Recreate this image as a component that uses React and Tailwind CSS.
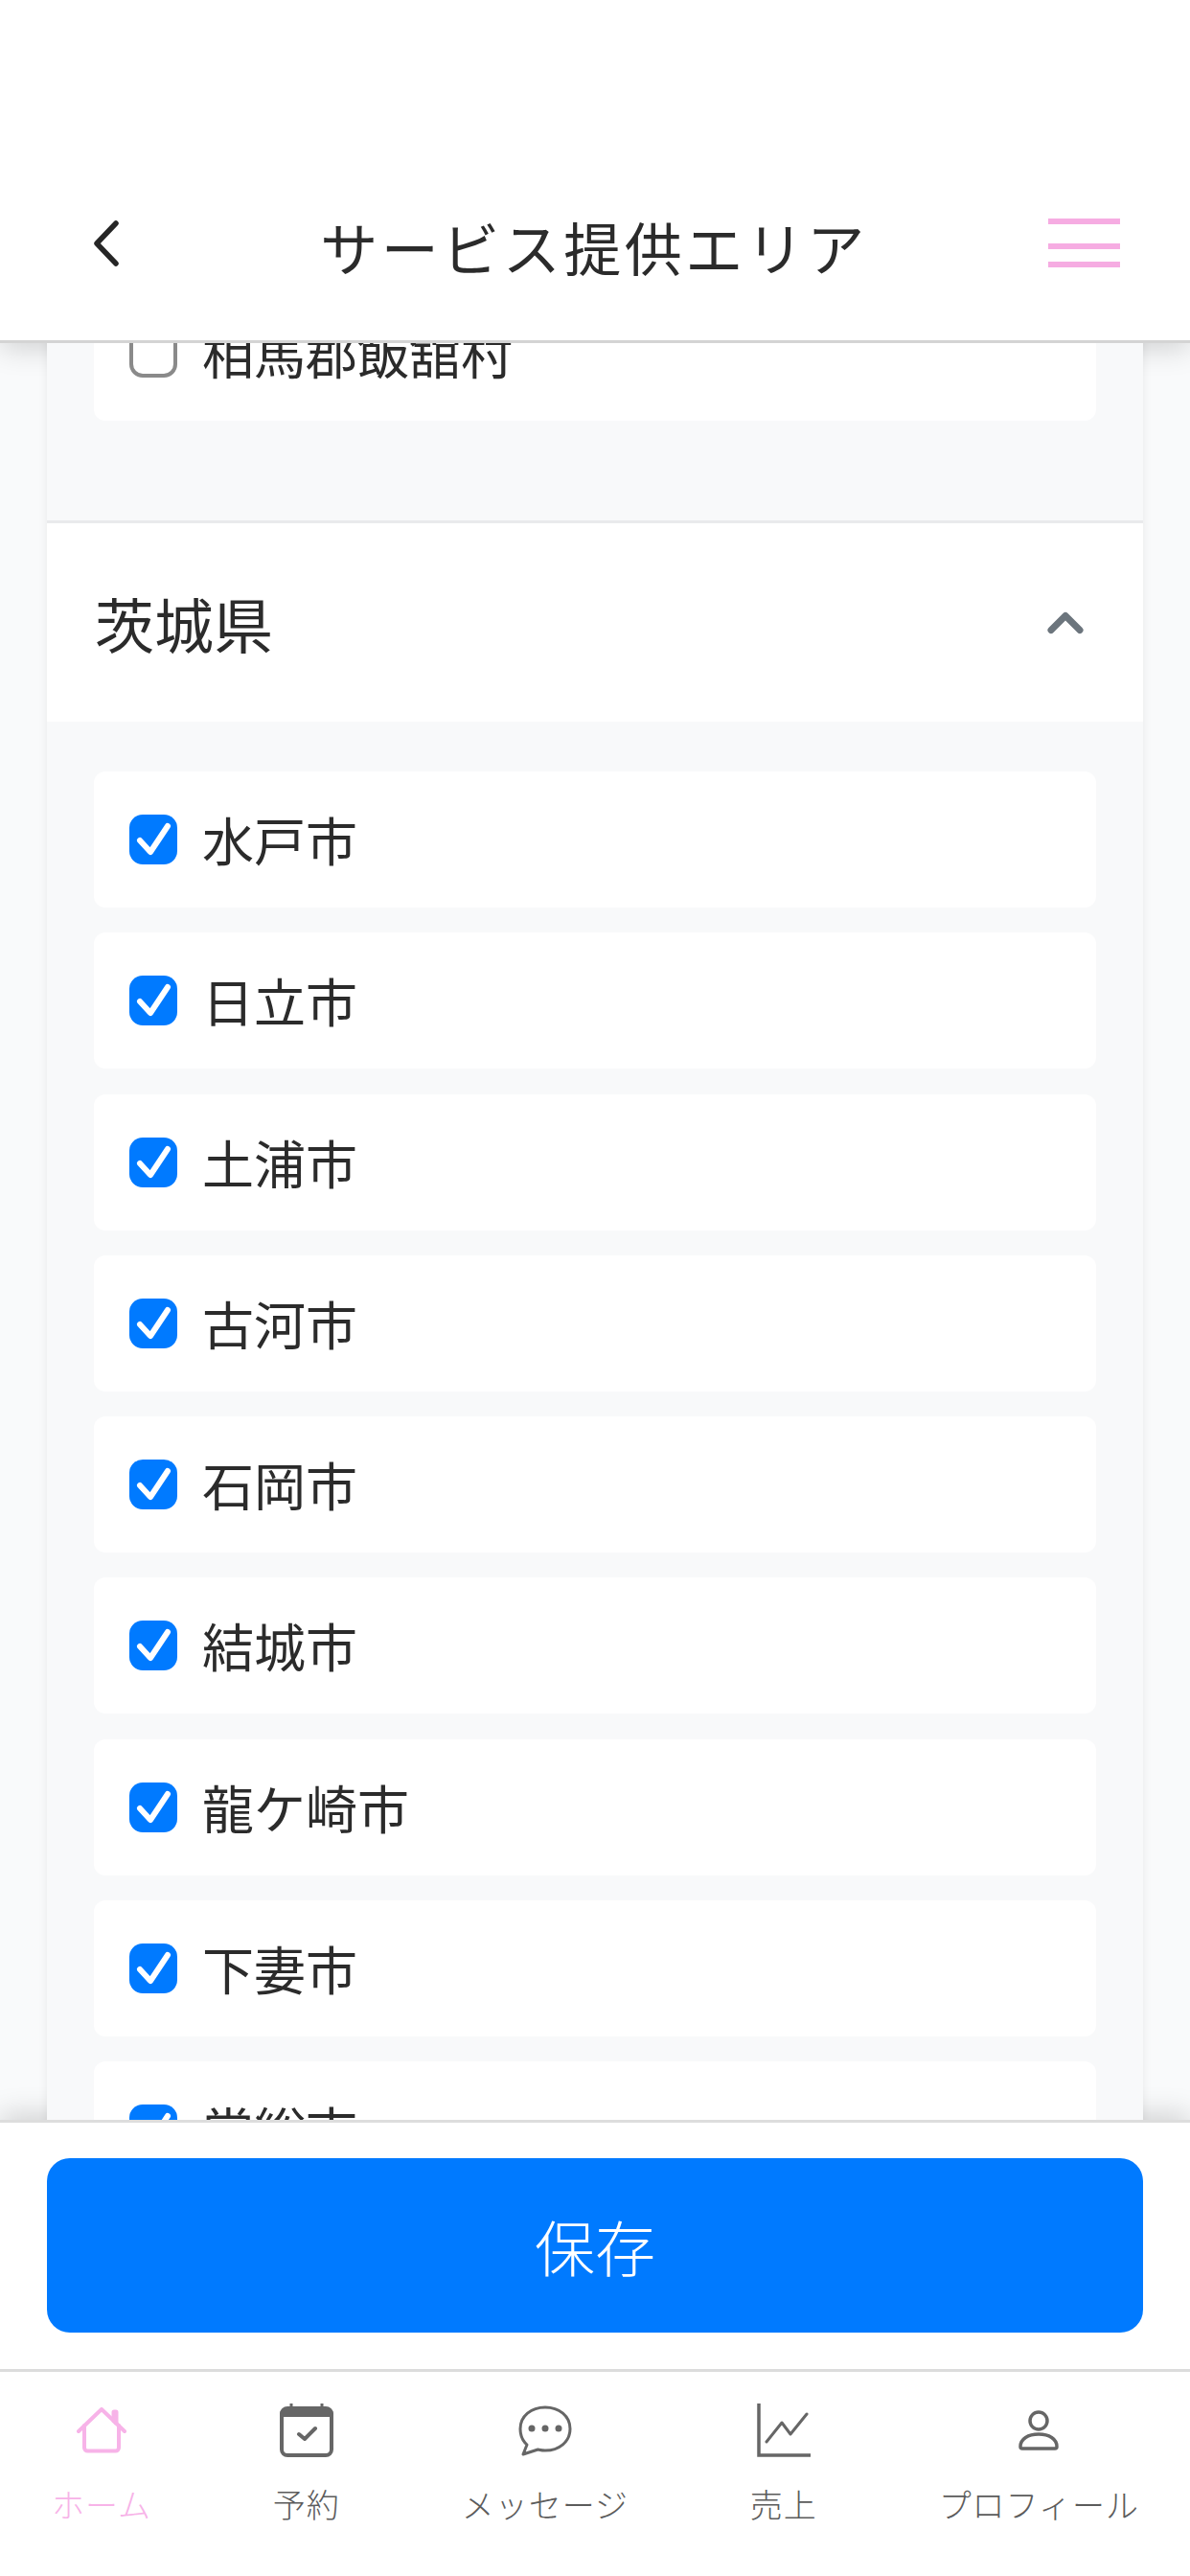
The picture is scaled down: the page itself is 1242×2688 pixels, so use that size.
import { ChevronUp } from "lucide-react";

const cities = ["水戸市", "日立市", "土浦市", "古河市", "石岡市", "結城市", "龍ケ崎市", "下妻市", "常総市"];

function CityRow({ name, checked }) {
  return (
    <label className="flex h-[142px] items-center rounded-[12px] bg-white pl-[37px]">
      {checked ? (
        <span className="h-[52px] w-[50px] rounded-[14px] bg-[#007aff]">
          <svg width="50" height="52" viewBox="0 0 50 52" fill="none" stroke="#fff" strokeWidth="6" strokeLinecap="round" strokeLinejoin="round">
            <path d="M11 27l11 12 18-27" />
          </svg>
        </span>
      ) : (
        <span className="h-[52px] w-[50px] rounded-[14px] border-[4px] border-[#8a8a8a] bg-white" />
      )}
      <span className="ml-[26px] text-[54px] leading-none text-[#2b2b2b]">{name}</span>
    </label>
  );
}

function HomeIcon() {
  return (
    <svg width="52" height="48" viewBox="0 0 52 48" fill="none" stroke="#f7b3e8" strokeWidth="4" strokeLinecap="round" strokeLinejoin="round">
      <path d="M2 25 26 2l24 23" />
      <path d="M8 19v23a3.500 3.500 0 0 0 3.500 3.500h29a3.500 3.500 0 0 0 3.500-3.500V19" />
      <path d="M39 14V5h2v11" strokeWidth="5" />
    </svg>
  );
}

function CalendarIcon() {
  return (
    <svg width="56" height="56" viewBox="0 0 56 56" fill="none">
      <rect x="2" y="5" width="52" height="49" rx="6" stroke="#666" strokeWidth="4" />
      <path d="M0 11a6 6 0 0 1 6-6h44a6 6 0 0 1 6 6v3H0z" fill="#666" />
      <path d="M12 0v6M44 0v6" stroke="#666" strokeWidth="3" />
      <path d="M20 32l6 5 11-11" stroke="#666" strokeWidth="4" strokeLinecap="round" strokeLinejoin="round" />
    </svg>
  );
}

function ChatIcon() {
  return (
    <svg width="56" height="53" viewBox="0 0 56 53" fill="none">
      <path d="M28 2C42.500 2 54 11 54 24.500S42.500 47 28 47C25 47 23 46.500 20.500 46L5 51 9 41C4.500 37 2 31 2 24.500 2 11 13.500 2 28 2z" stroke="#666" strokeWidth="3" strokeLinejoin="round" />
      <circle cx="14" cy="24" r="3.500" fill="#666" />
      <circle cx="28" cy="24" r="3.500" fill="#666" />
      <circle cx="42" cy="24" r="3.500" fill="#666" />
    </svg>
  );
}

function ChartIcon() {
  return (
    <svg width="56" height="56" viewBox="0 0 56 56" fill="none" stroke="#666">
      <path d="M2 0v54h54" strokeWidth="3.500" />
      <path d="M10 40l16-20 9 12 17-21" strokeWidth="3" strokeLinecap="round" strokeLinejoin="round" />
    </svg>
  );
}

function PersonIcon() {
  return (
    <svg width="42" height="42" viewBox="0 0 42 42" fill="none" stroke="#666" strokeWidth="3.500">
      <circle cx="21" cy="11" r="9" />
      <path d="M2 38C2 30 10 25 21 25s19 5 19 13c0 1.500-.5 2-2 2H4c-1.500 0-2-.5-2-2z" strokeLinejoin="round" />
    </svg>
  );
}

const tabs = [
  { label: "ホーム", icon: <HomeIcon />, active: true },
  { label: "予約", icon: <CalendarIcon /> },
  { label: "メッセージ", icon: <ChatIcon /> },
  { label: "売上", icon: <ChartIcon /> },
  { label: "プロフィール", icon: <PersonIcon /> },
];

export default function App() {
  return (
    <div className="flex h-[2688px] w-[1242px] flex-col overflow-hidden bg-[#f9fafb] font-['Noto_Sans_CJK_JP','Noto_Sans',sans-serif]">
      <header className="flex h-[358px] shrink-0 items-center border-b-[3px] border-[#d4d4d4] bg-white pt-[152px] pl-[98px] pr-[73px] shadow-[0_6px_28px_rgba(0,0,0,0.16)]">
        <div className="w-[48px]">
          <svg width="26" height="48" viewBox="0 0 26 48" fill="none" stroke="#262626" strokeWidth="5.500" strokeLinecap="round" strokeLinejoin="round">
            <path d="M23 3 3 24l20 21" />
          </svg>
        </div>
        <h1 className="mt-[7px] flex-1 text-center text-[60px] leading-none tracking-[3.5px] text-[#2b2b2b]">サービス提供エリア</h1>
        <div className="flex w-[75px] flex-col">
          <span className="h-[6px] bg-[#f6ace2]" />
          <span className="mt-[20px] h-[6px] bg-[#f6ace2]" />
          <span className="mt-[13px] h-[6px] bg-[#f6ace2]" />
        </div>
      </header>

      <main className="relative z-10 min-h-0 flex-1 overflow-hidden">
        <div className="mx-[49px] -mt-[61px] bg-[#f8f9fa] shadow-[0_0_10px_rgba(0,0,0,0.07)]">
          <div className="px-[49px] pb-[104px]">
            <CityRow name="相馬郡飯舘村" />
          </div>
          <div className="flex h-[210px] items-center justify-between border-t-[3px] border-[#e9eaec] bg-white pl-[50px] pr-[51px]">
            <h2 className="text-[62px] leading-none text-[#2b2b2b]">茨城県</h2>
            <ChevronUp size={60} strokeWidth={2.8} className="text-[#6c757d]" />
          </div>
          <div className="flex flex-col gap-[26.25px] px-[49px] pt-[52px]">
            {cities.map((c) => (
              <CityRow key={c} name={c} checked />
            ))}
          </div>
        </div>
      </main>

      <footer className="shrink-0 bg-white shadow-[0_-6px_28px_rgba(0,0,0,0.16)]">
        <div className="border-t-[3px] border-[#dddddd] px-[49px] pt-[37px] pb-[38px]">
          <button className="flex h-[182px] w-full items-center justify-center rounded-[24px] bg-[#007aff] text-[63px] font-light text-white">保存</button>
        </div>
        <nav className="flex h-[216px] justify-between border-t-[3px] border-[#dcdcdc] pt-[33px] pl-[54px] pr-[53px]">
          {tabs.map((t) => (
            <div key={t.label} className="flex flex-col items-center">
              <div className="flex h-[56px] items-center">{t.icon}</div>
              <span className={`mt-[27px] text-[34px] leading-[44px] font-light tracking-[1px] ${t.active ? "text-[#f7b3e8]" : "text-[#5c5c5c]"}`}>{t.label}</span>
            </div>
          ))}
        </nav>
      </footer>
    </div>
  );
}
